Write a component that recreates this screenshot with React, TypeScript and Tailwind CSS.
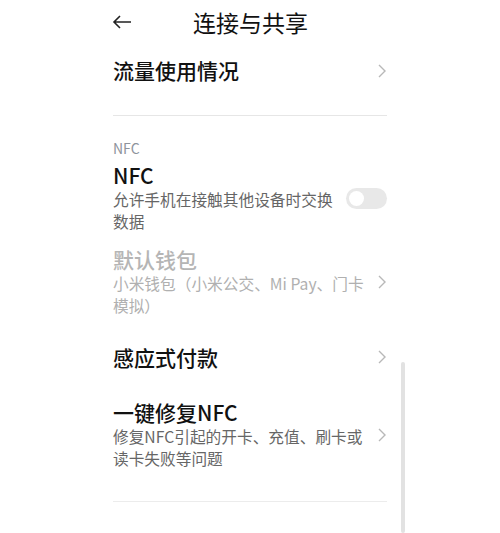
import React from "react";

const font = { fontFamily: '"Noto Sans CJK SC", "Noto Sans", sans-serif' };

function Chevron() {
  return (
    <svg width="10" height="16" viewBox="0 0 10 16" className="shrink-0">
      <polyline points="2,2 8,8 2,14" fill="none" stroke="#b8b8b8" strokeWidth="1.4" />
    </svg>
  );
}

export default function App() {
  return (
    <div className="relative w-[500px] h-[533px] bg-white overflow-hidden" style={font}>
      {/* header */}
      <div className="h-[44px] flex items-center pl-[112px]">
        <svg width="20" height="14" viewBox="0 0 20 14">
          <path d="M19 7H2M8 1L2 7l6 6" fill="none" stroke="#222" strokeWidth="1.6" />
        </svg>
        <div className="ml-[61px] text-[23px] leading-[30px] text-[#111]">连接与共享</div>
      </div>

      <div className="w-[274px] ml-[113px] flex flex-col">
        <div className="h-[54px] flex items-center justify-between">
          <span className="text-[21px] font-medium text-[#111]">流量使用情况</span>
          <Chevron />
        </div>
        <div className="mt-[17px] h-px bg-[#e6e6e6]" />

        <div className="mt-[22px] text-[14px] leading-[20px] text-[#8e939c]">NFC</div>
        <div className="mt-[5px] flex items-center justify-between">
          <div className="w-[225px] flex flex-col gap-[2px]">
            <div className="text-[21px] leading-[24px] font-medium text-[#111]">NFC</div>
            <div className="text-[15.7px] leading-[22px] text-[#666]">允许手机在接触其他设备时交换数据</div>
          </div>
          <div className="w-[41px] h-[21px] rounded-full bg-[#e8e8e8] flex items-center pl-[3px]">
            <div className="w-[15px] h-[15px] rounded-full bg-white" />
          </div>
        </div>

        <div className="mt-[14px] flex items-center justify-between">
          <div className="w-[258px] flex flex-col gap-[2px]">
            <div className="text-[21px] leading-[24px] font-medium text-[#b5b5b5]">默认钱包</div>
            <div className="text-[15.7px] leading-[22px] text-[#b0b0b0]">小米钱包（小米公交、Mi Pay、门卡模拟）</div>
          </div>
          <Chevron />
        </div>

        <div className="mt-[27px] h-[26px] flex items-center justify-between">
          <span className="text-[21px] leading-[26px] font-medium text-[#111]">感应式付款</span>
          <Chevron />
        </div>

        <div className="mt-[30px] flex items-center justify-between">
          <div className="w-[255px] flex flex-col gap-[2px]">
            <div className="text-[21px] leading-[24px] font-medium text-[#111]">一键修复NFC</div>
            <div className="text-[15.7px] leading-[22px] text-[#666]">修复NFC引起的开卡、充值、刷卡或读卡失败等问题</div>
          </div>
          <Chevron />
        </div>

        <div className="mt-[31px] h-px bg-[#ececec]" />
      </div>

      {/* scrollbar */}
      <div className="absolute left-[401px] top-[362px] w-[4px] h-[171px] bg-[#e2e2e2] rounded-sm" />
    </div>
  );
}
